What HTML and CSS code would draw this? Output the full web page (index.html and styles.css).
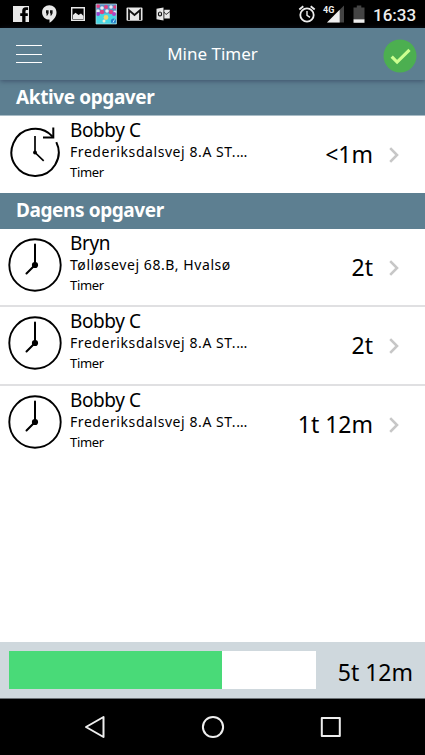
FILE: index.html
```html
<!DOCTYPE html>
<html lang="da">
<head>
    <meta charset="UTF-8">
    <title>Mine Timer</title>
    <link rel="stylesheet" href="styles.css">
</head>

<body>
<svg class="defs" width="0" height="0">
    <symbol id="clock" viewBox="0 0 56 56">
        <circle cx="28" cy="28" r="25.7" fill="none" stroke="#000" stroke-width="1.9"/>
        <path d="M28 28V7.5M28 28l-8.5 8.5" fill="none" stroke="#000" stroke-width="2" stroke-linecap="round"/>
        <circle cx="28" cy="28" r="3.1"/>
    </symbol>
    <symbol id="clock-active" viewBox="0 0 56 56">
        <path d="M45.6 12.6A23.6 23.6 0 1 0 49.3 18.1" fill="none" stroke="#000" stroke-width="2"/>
        <path d="M46.3 3.5v9.9H36" fill="none" stroke="#000" stroke-width="2"/>
        <path d="M28 12v16.5l8.7 8.3" fill="none" stroke="#000" stroke-width="1.7"/>
        <circle cx="28" cy="28.5" r="1.9"/>
    </symbol>
    <symbol id="chevron" viewBox="0 0 10 16">
        <path d="M1.2 1.2L8 8l-6.8 6.8" fill="none" stroke="#c7c7c7" stroke-width="2.6"/>
    </symbol>
</svg>

<div class="status-bar">
    <svg width="180" height="28" viewBox="0 0 180 28">
        <path fill="#e8e8e8" d="M13 6h16v16h-3.500v-6h2.300v-2.800h-2.300v-2c0-1 .5-1.300 1.300-1.300h1.300V7.300h-2.300c-2.500 0-3.600 1.500-3.600 3.700v2.200h-2V16h2v6H13z"/>
        <path fill="#e8e8e8" d="M49.300 5.300c4 0 7.200 3.100 7.200 7.100 0 4.600-3.600 8.200-7 10.300v-3.100c-4.200 0-7.400-3.100-7.400-7.200s3.200-7.100 7.200-7.100z"/>
        <path fill="#111" d="M46 10.300h2.600v3l-1.200 2.200h-1.200l.7-2.100H46zM50 10.300h2.600v3l-1.200 2.200h-1.200l.7-2.100H50z"/>
        <path d="M71.700 7.700h12.600v12.600H71.700z" fill="none" stroke="#e8e8e8" stroke-width="1.400"/>
        <path d="M73 19v-4l2.500-2.200 3 2.200 2.500-1.500 2.500 2.500v3z" fill="#e8e8e8"/>
        <path d="M96 4h20.500v20H96z" fill="#48d7e5"/>
        <path d="M96 4h20.500v9.500H96z" fill="#5b91c5"/>
        <g fill="#e43f83">
            <circle cx="98" cy="6" r="2"/><circle cx="106" cy="7" r="2"/><circle cx="115" cy="7" r="1.800"/>
            <circle cx="102" cy="12" r="2.200"/><circle cx="111" cy="12" r="2.200"/>
        </g>
        <g fill="#e7edf5">
            <circle cx="102" cy="8" r="1.800"/><circle cx="111" cy="7" r="1.700"/><circle cx="98" cy="11" r="1.800"/>
            <circle cx="107" cy="11" r="1.800"/><circle cx="115" cy="12" r="1.600"/>
        </g>
        <circle cx="98" cy="14" r="2" fill="#9b42cc"/>
        <circle cx="114" cy="14" r="2" fill="#b044c4"/>
        <circle cx="106" cy="17.500" r="2.400" fill="#f3d66c"/>
        <circle cx="104" cy="21" r="1.500" fill="#f4ecd0"/>
        <circle cx="113.500" cy="21" r="2.600" fill="#2781c9"/>
        <path d="M113 22.500l1.500-3" stroke="#bce8ff"/>
        <path d="M96 4h20.500v20H96z" fill="none" stroke="#b8dce2" stroke-width=".7"/>
        <rect x="126.500" y="7.500" width="16" height="13.200" rx="1" fill="#e8e8e8"/>
        <path d="M129 20V10.300l5.500 4.700 5.500-4.700V20" fill="none" stroke="#111" stroke-width="1.800"/>
        <path d="M156.500 8.800l7-1.300v13l-7-1.200zM164.300 9.800h5.500v8.600h-5.500z" fill="#e8e8e8"/>
        <ellipse cx="160" cy="14" rx="1.600" ry="2" fill="none" stroke="#111" stroke-width="1.200"/>
        <path d="M164 12l2 2.500 4-3" fill="none" stroke="#222" stroke-width=".9"/>
    </svg>
    <div class="status-right">
        <svg width="18" height="28" viewBox="0 0 18 28">
            <circle cx="9" cy="15" r="6.700" fill="none" stroke="#eee" stroke-width="1.800"/>
            <path d="M9 11v4.300l3 2" fill="none" stroke="#eee" stroke-width="1.400"/>
            <path d="M1.300 9.500l4-3.300M16.700 9.500l-4-3.300" stroke="#eee" stroke-width="1.800"/>
        </svg>
        <div class="signal">
            <span>4G</span>
            <svg width="22" height="28" viewBox="0 0 22 28">
                <path d="M21 5.500v17H4z" fill="#444"/>
                <path d="M16.700 9.700v12.800H4z" fill="#eee"/>
            </svg>
        </div>
        <svg class="battery" width="12" height="28" viewBox="0 0 12 28">
            <path d="M.5 7.500h3.300V5.500h4.500v2h3.200v12H.5z" fill="#444"/>
            <path d="M.5 19.300h11v3.500H.5z" fill="#eee"/>
        </svg>
        <span class="time">16:33</span>
    </div>
</div>

<header class="header">
    <div class="menu"><i></i><i></i><i></i></div>
    <h1>Mine Timer</h1>
    <svg class="check" width="34" height="34" viewBox="0 0 34 34">
        <circle cx="17" cy="17" r="16.500" fill="#4caf50"/>
        <path d="M8.700 17.700l5.400 5.400L26.500 10.900" fill="none" stroke="#ccff90" stroke-width="3.200"/>
    </svg>
</header>

<main class="list">
    <h2>Aktive opgaver</h2>
    <div class="task active">
        <svg class="icon"><use href="#clock-active"/></svg>
        <div class="info">
            <div class="name">Bobby C</div>
            <div class="address">Frederiksdalsvej 8.A ST.…</div>
            <div class="type">Timer</div>
        </div>
        <div class="hours">&lt;1m</div>
        <svg class="chevron"><use href="#chevron"/></svg>
    </div>
    <h2>Dagens opgaver</h2>
    <div class="task line">
        <svg class="icon"><use href="#clock"/></svg>
        <div class="info">
            <div class="name">Bryn</div>
            <div class="address">Tølløsevej 68.B, Hvalsø</div>
            <div class="type">Timer</div>
        </div>
        <div class="hours">2t</div>
        <svg class="chevron"><use href="#chevron"/></svg>
    </div>
    <div class="task line tall">
        <svg class="icon"><use href="#clock"/></svg>
        <div class="info">
            <div class="name">Bobby C</div>
            <div class="address">Frederiksdalsvej 8.A ST.…</div>
            <div class="type">Timer</div>
        </div>
        <div class="hours">2t</div>
        <svg class="chevron"><use href="#chevron"/></svg>
    </div>
    <div class="task">
        <svg class="icon"><use href="#clock"/></svg>
        <div class="info">
            <div class="name">Bobby C</div>
            <div class="address">Frederiksdalsvej 8.A ST.…</div>
            <div class="type">Timer</div>
        </div>
        <div class="hours">1t 12m</div>
        <svg class="chevron"><use href="#chevron"/></svg>
    </div>
</main>

<footer class="total">
    <div class="progress"><div class="bar" style="width: 69.3%"></div></div>
    <div class="sum">5t 12m</div>
</footer>

<nav class="nav-bar">
    <svg width="24" height="24" viewBox="0 0 24 24"><path d="M20.500 2v20L3 12z"/></svg>
    <svg width="24" height="24" viewBox="0 0 24 24"><circle cx="12" cy="12" r="10.100"/></svg>
    <svg width="24" height="24" viewBox="0 0 24 24"><rect x="2.800" y="3" width="18" height="18"/></svg>
</nav>
</body>

</html>
```
FILE: styles.css
```css
* {
    box-sizing: border-box;
}

body {
    margin: 0;
    height: 755px;
    display: flex;
    flex-direction: column;
    background: #fff;
    color: #000;
    font-family: "Noto Sans", sans-serif;
    overflow: hidden;
}

svg {
    display: block;
    flex: none;
}

.defs {
    display: none;
}

.status-bar {
    height: 28px;
    flex: none;
    display: flex;
    justify-content: space-between;
    background: #000;
}

.status-right {
    display: flex;
    padding-right: 9px;
    color: #eee;
    font-family: Roboto, sans-serif;
}

.signal {
    display: flex;
    margin-left: 7px;
}

.signal span {
    width: 11px;
    margin-right: -11px;
    padding-top: 5px;
    font-size: 9px;
    line-height: 11px;
    font-weight: bold;
    z-index: 1;
}

.battery {
    margin-left: 8px;
}

.time {
    width: 43px;
    margin-left: 8px;
    font-size: 17px;
    line-height: 30px;
    font-weight: 500;
    white-space: nowrap;
}

.header {
    height: 52px;
    flex: none;
    display: flex;
    align-items: center;
    justify-content: space-between;
    padding: 0 8px 0 16px;
    background: #5d7f91;
    box-shadow: 0 1px 5px rgba(40, 50, 80, 0.6);
    z-index: 1;
}

.menu {
    width: 26px;
    height: 18px;
    display: flex;
    flex-direction: column;
    justify-content: space-between;
}

.menu i {
    height: 1px;
    background: #fff;
}

.header h1 {
    margin: 0;
    padding-bottom: 2px;
    color: #fff;
    font-size: 17px;
    font-weight: normal;
}

.check {
    margin-top: 3px;
}

.list {
    flex: 1;
}

.list h2 {
    height: 35px;
    margin: 0;
    padding-left: 16px;
    background: #5d7f91;
    color: #fff;
    font-size: 19px;
    line-height: 35px;
    letter-spacing: -0.4px;
}

.task {
    height: 78px;
    display: flex;
    padding-right: 26px;
}

.task + h2 {
    height: 36px;
}

.line {
    border-bottom: 2px solid #e0e0e2;
}

.tall {
    height: 79px;
}

.icon {
    width: 56px;
    height: 56px;
    margin: 8px 0 0 7px;
}

.info {
    flex: 1;
    padding-left: 7px;
    white-space: nowrap;
}

.name {
    padding-top: 2px;
    font-size: 19px;
    line-height: 24px;
    letter-spacing: -0.4px;
}

.address {
    font-size: 14px;
    line-height: 20px;
    letter-spacing: 0.57px;
}

.type {
    font-size: 13px;
    line-height: 21px;
    letter-spacing: -0.3px;
}

.hours {
    font-size: 23px;
    line-height: 76px;
}

.chevron {
    width: 10px;
    height: 16px;
    margin: 31px 0 0 16px;
}

.active {
    border-top: 1px solid #a9bcc6;
}

.total {
    height: 56px;
    flex: none;
    display: flex;
    align-items: center;
    justify-content: space-between;
    padding: 0 12px 0 9px;
    background: #cfd8dd;
}

.progress {
    width: 307px;
    height: 38px;
    background: #fff;
}

.bar {
    height: 100%;
    background: #49da78;
}

.sum {
    font-size: 23px;
    padding-top: 4px;
}

.nav-bar {
    height: 57px;
    flex: none;
    display: flex;
    align-items: center;
    justify-content: center;
    gap: 94px;
    background: #000;
    border-top: 1px solid #6c7276;
}

.nav-bar svg {
    fill: none;
    stroke: #eee;
    stroke-width: 2;
    stroke-linejoin: round;
}
```
